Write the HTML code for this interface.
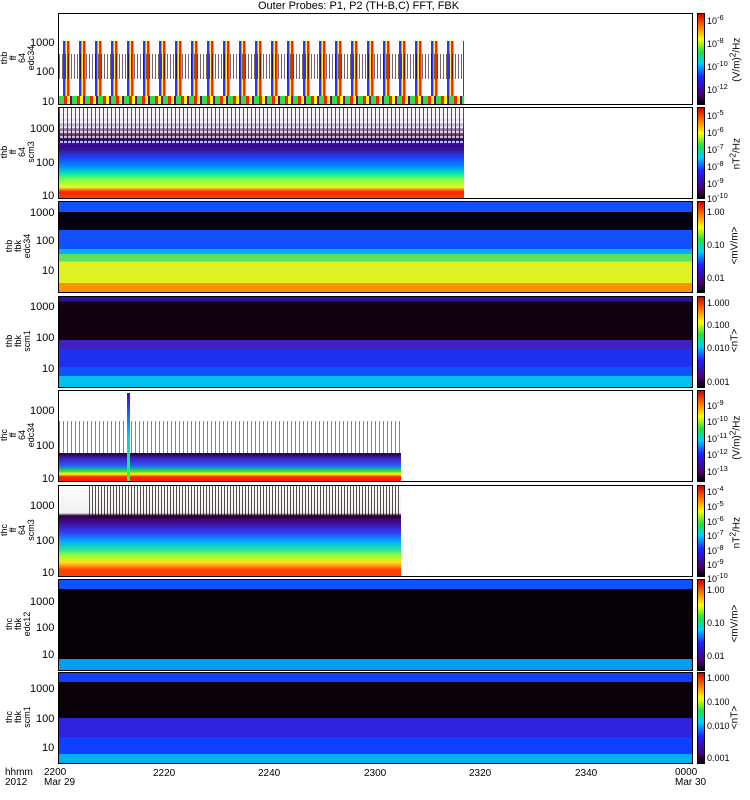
<!DOCTYPE html>
<html><head><meta charset="utf-8"><style>
body{margin:0;width:750px;height:800px;background:#fff;position:relative;overflow:hidden;font-family:"Liberation Sans",sans-serif;color:#000}
.t{position:absolute;font-size:11px;line-height:11px;white-space:nowrap}
.p{position:absolute;left:58px;width:633px;height:90px;border:1px solid #000;background:#fff;overflow:hidden}
.cb{position:absolute;left:697px;width:6px;height:90px;border:1px solid #000;background:linear-gradient(to top,#000,#4a0070 10%,#2020ff 30%,#00d0ff 45%,#20e040 58%,#ffff00 72%,#ff8000 85%,#d00000)}
.d{position:absolute}
.yl{position:absolute;font-size:9px;line-height:9px;text-align:center;width:60px;height:40px;display:flex;flex-direction:column;justify-content:center;transform:rotate(-90deg)}
.cl{position:absolute;font-size:10px;width:80px;text-align:center;transform:rotate(-90deg);white-space:nowrap}
</style></head><body>
<div class="t" style="left:258px;top:1px;font-size:11px">Outer Probes: P1, P2 (TH-B,C) FFT, FBK</div>

<!-- Panel 1 -->
<div class="p" style="top:13px">
 <div class="d" style="left:0;top:0;width:405px;height:90px;background:repeating-linear-gradient(90deg,#fff 0 4px,#3030ff 4px 6px,#00e0ff 6px 7px,#ffff00 7px 8px,#ff2000 8px 10px,#30ff30 10px 11px,#fff 11px 16px);clip-path:polygon(0 30%,100% 30%,100% 100%,0 100%)"></div>
 <div class="d" style="left:0;top:40px;width:405px;height:25px;background:repeating-linear-gradient(90deg,#200 0 1px,transparent 1px 3px);opacity:.6"></div>
 <div class="d" style="left:0;top:82px;width:405px;height:8px;background:repeating-linear-gradient(90deg,#30e040 0 5px,#ff2000 5px 8px,#ffff00 8px 11px,#6000a0 11px 13px)"></div>
</div>
<div class="cb" style="top:13px"></div>
<div class="yl" style="left:-12px;top:38px">thb<br>ff<br>64<br>edc34</div>
<div class="t" style="left:30px;top:38px">1000</div><div class="t" style="left:36px;top:67px">100</div><div class="t" style="left:42px;top:97px">10</div>
<div class="t" style="left:707px;top:12px;font-size:9px">10<sup>-6</sup></div>
<div class="t" style="left:707px;top:35px;font-size:9px">10<sup>-8</sup></div>
<div class="t" style="left:707px;top:58px;font-size:9px">10<sup>-10</sup></div>
<div class="t" style="left:707px;top:81px;font-size:9px">10<sup>-12</sup></div>
<div class="cl" style="left:695px;top:52px">(V/m)<sup>2</sup>/Hz</div>

<!-- Panel 2 -->
<div class="p" style="top:107px">
 <div class="d" style="left:0;top:0;width:405px;height:90px;background:linear-gradient(to bottom,#fff 0,#e8e0f0 15%,#3a1050 35%,#2020e0 38%,#400080 42%,#3020a0 48%,#2040ff 55%,#0090ff 65%,#00e0c0 72%,#80ff40 80%,#e0ff20 88%,#ff2000 93%,#ff4000 100%)"></div>
 <div class="d" style="left:0;top:0;width:405px;height:35px;background:repeating-linear-gradient(90deg,#200030 0 1px,transparent 1px 4px),repeating-linear-gradient(0deg,#fff 0 2px,transparent 2px 5px);opacity:.7"></div>
</div>
<div class="cb" style="top:107px"></div>
<div class="yl" style="left:-12px;top:132px">thb<br>ff<br>64<br>scm3</div>
<div class="t" style="left:30px;top:124px">1000</div><div class="t" style="left:36px;top:158px">100</div><div class="t" style="left:42px;top:191px">10</div>
<div class="t" style="left:707px;top:107px;font-size:9px">10<sup>-5</sup></div>
<div class="t" style="left:707px;top:124px;font-size:9px">10<sup>-6</sup></div>
<div class="t" style="left:707px;top:141px;font-size:9px">10<sup>-7</sup></div>
<div class="t" style="left:707px;top:158px;font-size:9px">10<sup>-8</sup></div>
<div class="t" style="left:707px;top:175px;font-size:9px">10<sup>-9</sup></div>
<div class="t" style="left:707px;top:190px;font-size:9px">10<sup>-10</sup></div>
<div class="cl" style="left:695px;top:146px">nT<sup>2</sup>/Hz</div>

<!-- Panel 3 -->
<div class="p" style="top:201px;background:linear-gradient(to bottom,#1050ff 0 11%,#050010 11% 31%,#1050ff 31% 52%,#00b0ff 52% 58%,#60e060 58% 66%,#e0f020 66% 90%,#ff9000 90%)"></div>
<div class="cb" style="top:201px"></div>
<div class="yl" style="left:-12px;top:226px">thb<br>fbk<br>edc34</div>
<div class="t" style="left:30px;top:208px">1000</div><div class="t" style="left:36px;top:236px">100</div><div class="t" style="left:42px;top:266px">10</div>
<div class="t" style="left:707px;top:207px;font-size:9px">1.00</div>
<div class="t" style="left:707px;top:240px;font-size:9px">0.10</div>
<div class="t" style="left:707px;top:273px;font-size:9px">0.01</div>
<div class="cl" style="left:695px;top:240px">&lt;mV/m&gt;</div>

<!-- Panel 4 -->
<div class="p" style="top:296px;background:linear-gradient(to bottom,#3010a0 0 5%,#100010 5% 48%,#4020c0 48% 58%,#2030f0 58% 78%,#1050ff 78% 88%,#00c0f0 88%)"></div>
<div class="cb" style="top:296px"></div>
<div class="yl" style="left:-12px;top:321px">thb<br>fbk<br>scm1</div>
<div class="t" style="left:30px;top:302px">1000</div><div class="t" style="left:36px;top:333px">100</div><div class="t" style="left:42px;top:364px">10</div>
<div class="t" style="left:707px;top:298px;font-size:9px">1.000</div>
<div class="t" style="left:707px;top:320px;font-size:9px">0.100</div>
<div class="t" style="left:707px;top:343px;font-size:9px">0.010</div>
<div class="t" style="left:707px;top:377px;font-size:9px">0.001</div>
<div class="cl" style="left:695px;top:335px">&lt;nT&gt;</div>

<!-- Panel 5 -->
<div class="p" style="top:390px">
 <div class="d" style="left:0;top:30px;width:342px;height:60px;background:repeating-linear-gradient(90deg,#200 0 1px,transparent 1px 4px);opacity:.5"></div>
 <div class="d" style="left:0;top:62px;width:342px;height:28px;background:linear-gradient(to bottom,#200030 0,#4020c0 20%,#2060ff 45%,#30e040 65%,#ffff00 75%,#ff2000 85%)"></div>
 <div class="d" style="left:68px;top:2px;width:3px;height:88px;background:linear-gradient(#30f,#0cf,#3f3)"></div>
</div>
<div class="cb" style="top:390px"></div>
<div class="yl" style="left:-12px;top:415px">thc<br>ff<br>64<br>edc34</div>
<div class="t" style="left:30px;top:406px">1000</div><div class="t" style="left:36px;top:441px">100</div><div class="t" style="left:42px;top:474px">10</div>
<div class="t" style="left:707px;top:397px;font-size:9px">10<sup>-9</sup></div>
<div class="t" style="left:707px;top:413px;font-size:9px">10<sup>-10</sup></div>
<div class="t" style="left:707px;top:430px;font-size:9px">10<sup>-11</sup></div>
<div class="t" style="left:707px;top:446px;font-size:9px">10<sup>-12</sup></div>
<div class="t" style="left:707px;top:463px;font-size:9px">10<sup>-13</sup></div>
<div class="cl" style="left:695px;top:430px">(V/m)<sup>2</sup>/Hz</div>

<!-- Panel 6 -->
<div class="p" style="top:485px">
 <div class="d" style="left:0;top:0;width:342px;height:90px;background:linear-gradient(to bottom,#fff 0,#f0f0f0 30%,#300040 33%,#4010a0 42%,#3040ff 52%,#00b0ff 62%,#20e0a0 70%,#a0ff30 78%,#ffe020 85%,#ff4000 93%)"></div>
 <div class="d" style="left:30px;top:0;width:312px;height:32px;background:repeating-linear-gradient(90deg,#100 0 1px,transparent 1px 3px);opacity:.7"></div>
</div>
<div class="cb" style="top:485px"></div>
<div class="yl" style="left:-12px;top:510px">thc<br>ff<br>64<br>scm3</div>
<div class="t" style="left:30px;top:501px">1000</div><div class="t" style="left:36px;top:536px">100</div><div class="t" style="left:42px;top:568px">10</div>
<div class="t" style="left:707px;top:483px;font-size:9px">10<sup>-4</sup></div>
<div class="t" style="left:707px;top:498px;font-size:9px">10<sup>-5</sup></div>
<div class="t" style="left:707px;top:513px;font-size:9px">10<sup>-6</sup></div>
<div class="t" style="left:707px;top:527px;font-size:9px">10<sup>-7</sup></div>
<div class="t" style="left:707px;top:542px;font-size:9px">10<sup>-8</sup></div>
<div class="t" style="left:707px;top:556px;font-size:9px">10<sup>-9</sup></div>
<div class="t" style="left:707px;top:570px;font-size:9px">10<sup>-10</sup></div>
<div class="cl" style="left:695px;top:525px">nT<sup>2</sup>/Hz</div>

<!-- Panel 7 -->
<div class="p" style="top:579px;background:linear-gradient(to bottom,#1050ff 0 10%,#080008 10% 88%,#00a0f0 88%)"></div>
<div class="cb" style="top:579px"></div>
<div class="yl" style="left:-12px;top:604px">thc<br>fbk<br>edc12</div>
<div class="t" style="left:30px;top:597px">1000</div><div class="t" style="left:36px;top:623px">100</div><div class="t" style="left:42px;top:650px">10</div>
<div class="t" style="left:707px;top:585px;font-size:9px">1.00</div>
<div class="t" style="left:707px;top:618px;font-size:9px">0.10</div>
<div class="t" style="left:707px;top:651px;font-size:9px">0.01</div>
<div class="cl" style="left:695px;top:618px">&lt;mV/m&gt;</div>

<!-- Panel 8 -->
<div class="p" style="top:672px;background:linear-gradient(to bottom,#1040ff 0 10%,#0a0008 10% 50%,#3020e0 50% 71%,#1040ff 71% 90%,#00b0f0 90%)"></div>
<div class="cb" style="top:672px"></div>
<div class="yl" style="left:-12px;top:697px">thc<br>fbk<br>scm1</div>
<div class="t" style="left:30px;top:684px">1000</div><div class="t" style="left:36px;top:714px">100</div><div class="t" style="left:42px;top:743px">10</div>
<div class="t" style="left:707px;top:673px;font-size:9px">1.000</div>
<div class="t" style="left:707px;top:697px;font-size:9px">0.100</div>
<div class="t" style="left:707px;top:721px;font-size:9px">0.010</div>
<div class="t" style="left:707px;top:753px;font-size:9px">0.001</div>
<div class="cl" style="left:695px;top:712px">&lt;nT&gt;</div>

<!-- bottom axis -->
<div class="t" style="left:5px;top:768px;font-size:10px;line-height:10px">hhmm<br>2012</div>
<div class="t" style="left:44px;top:768px;font-size:10px;line-height:10px">2200<br>Mar 29</div>
<div class="t" style="left:153px;top:768px;font-size:10px">2220</div>
<div class="t" style="left:258px;top:768px;font-size:10px">2240</div>
<div class="t" style="left:364px;top:768px;font-size:10px">2300</div>
<div class="t" style="left:469px;top:768px;font-size:10px">2320</div>
<div class="t" style="left:575px;top:768px;font-size:10px">2340</div>
<div class="t" style="left:675px;top:768px;font-size:10px;line-height:10px">0000<br>Mar 30</div>
</body></html>
